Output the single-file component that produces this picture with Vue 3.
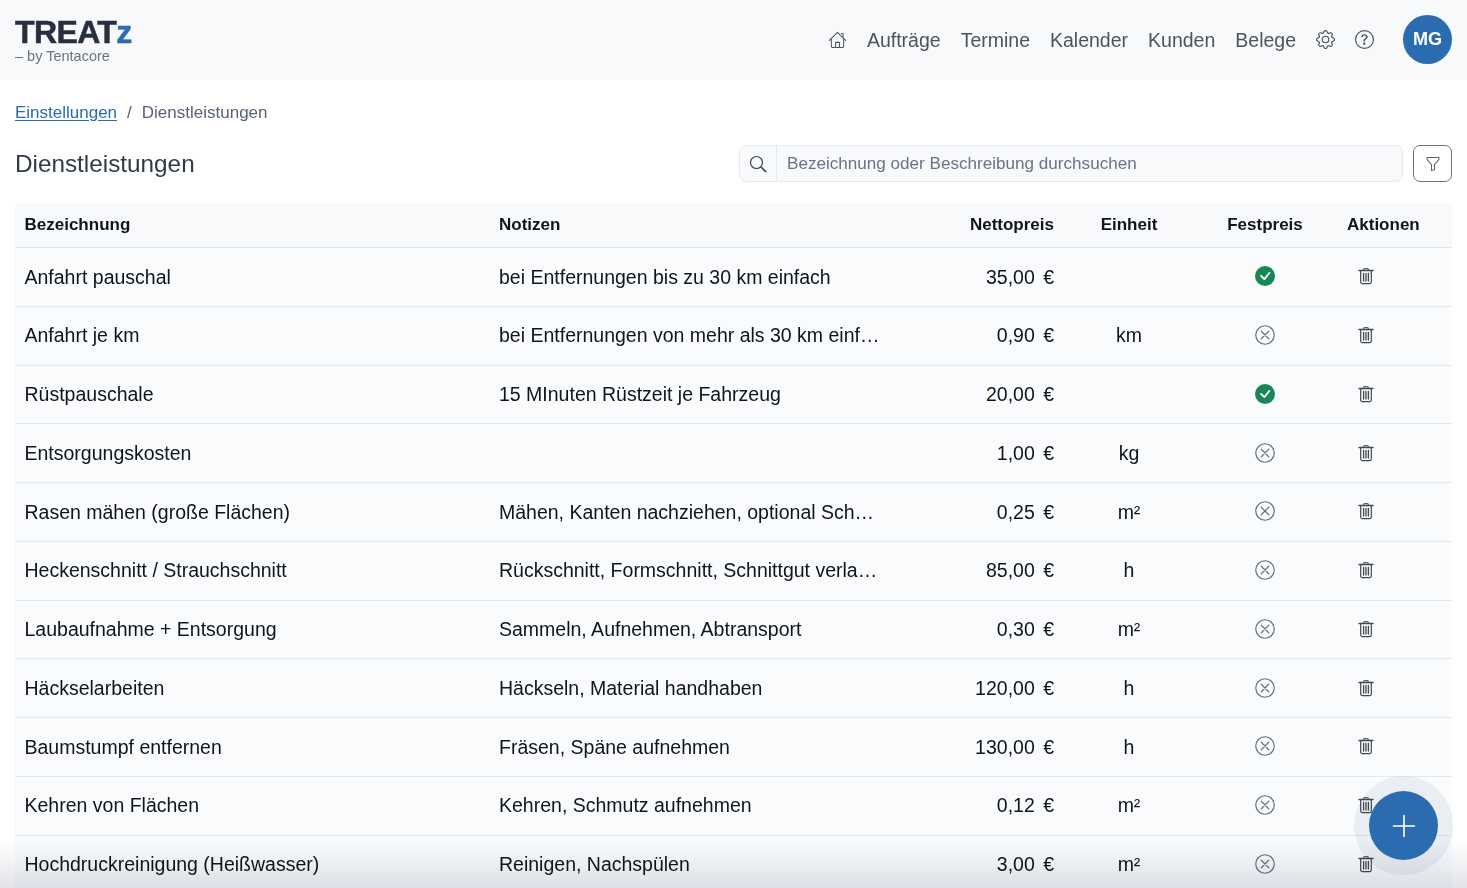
<script setup>
const rows = [
  { name: 'Anfahrt pauschal', note: 'bei Entfernungen bis zu 30 km einfach', price: '35,00 €', unit: '', fixed: true },
  { name: 'Anfahrt je km', note: 'bei Entfernungen von mehr als 30 km einf…', price: '0,90 €', unit: 'km', fixed: false },
  { name: 'Rüstpauschale', note: '15 MInuten Rüstzeit je Fahrzeug', price: '20,00 €', unit: '', fixed: true },
  { name: 'Entsorgungskosten', note: '', price: '1,00 €', unit: 'kg', fixed: false },
  { name: 'Rasen mähen (große Flächen)', note: 'Mähen, Kanten nachziehen, optional Sch…', price: '0,25 €', unit: 'm²', fixed: false },
  { name: 'Heckenschnitt / Strauchschnitt', note: 'Rückschnitt, Formschnitt, Schnittgut verla…', price: '85,00 €', unit: 'h', fixed: false },
  { name: 'Laubaufnahme + Entsorgung', note: 'Sammeln, Aufnehmen, Abtransport', price: '0,30 €', unit: 'm²', fixed: false },
  { name: 'Häckselarbeiten', note: 'Häckseln, Material handhaben', price: '120,00 €', unit: 'h', fixed: false },
  { name: 'Baumstumpf entfernen', note: 'Fräsen, Späne aufnehmen', price: '130,00 €', unit: 'h', fixed: false },
  { name: 'Kehren von Flächen', note: 'Kehren, Schmutz aufnehmen', price: '0,12 €', unit: 'm²', fixed: false },
  { name: 'Hochdruckreinigung (Heißwasser)', note: 'Reinigen, Nachspülen', price: '3,00 €', unit: 'm²', fixed: false },
]
const nav = ['Aufträge', 'Termine', 'Kalender', 'Kunden', 'Belege']
</script>

<template>
  <div class="page">
    <header class="top">
      <div class="brand">
        <div class="logo">TREAT<span>z</span></div>
        <div class="by">– by Tentacore</div>
      </div>
      <nav class="nav">
        <svg class="home" viewBox="0 0 20 20" fill="none" stroke="currentColor" stroke-width="1.100" stroke-linecap="round" stroke-linejoin="round"><path d="M1.500 10.500 10 2l8.500 8.500"/><path d="M3.500 8.500V16.800a1 1 0 0 0 1 1h11a1 1 0 0 0 1-1V8.500"/><path d="M8 17.800V12.500h4v5.300"/><path d="M14 3.200h1.800v3.800"/></svg>
        <a v-for="n in nav" :key="n" class="nav-link">{{ n }}</a>
        <svg class="nav-icon gear" viewBox="0 0 16 16" fill="currentColor"><path d="M8 4.750a3.250 3.250 0 1 0 0 6.500 3.250 3.250 0 0 0 0-6.500ZM5.750 8a2.250 2.250 0 1 1 4.500 0 2.250 2.250 0 0 1-4.500 0Z"/><path d="M9.800 1.340c-.53-1.790-3.070-1.790-3.600 0l-.1.340a.88.88 0 0 1-1.260.52l-.31-.17c-1.640-.89-3.430.9-2.540 2.540l.17.31a.88.88 0 0 1-.52 1.260l-.34.1c-1.790.53-1.790 3.070 0 3.600l.34.1a.88.88 0 0 1 .52 1.260l-.17.31c-.89 1.640.9 3.430 2.540 2.540l.31-.17a.88.88 0 0 1 1.260.52l.1.34c.53 1.790 3.070 1.790 3.600 0l.1-.34a.88.88 0 0 1 1.260-.52l.31.17c1.640.89 3.430-.9 2.540-2.540l-.17-.31a.88.88 0 0 1 .52-1.260l.34-.1c1.790-.53 1.790-3.070 0-3.600l-.34-.1a.88.88 0 0 1-.52-1.260l.17-.31c.89-1.640-.9-3.430-2.540-2.540l-.31.17a.88.88 0 0 1-1.260-.52l-.1-.34Zm-2.640.28c.25-.84 1.430-.84 1.680 0l.1.34a1.880 1.880 0 0 0 2.700 1.120l.31-.17c.76-.42 1.600.42 1.180 1.180l-.17.31a1.880 1.880 0 0 0 1.120 2.700l.34.1c.84.25.84 1.430 0 1.680l-.34.1a1.880 1.880 0 0 0-1.120 2.700l.17.31c.42.76-.42 1.600-1.180 1.180l-.31-.17a1.880 1.880 0 0 0-2.700 1.120l-.1.34c-.25.84-1.430.84-1.680 0l-.1-.34a1.880 1.880 0 0 0-2.700-1.120l-.31.17c-.76.42-1.600-.42-1.180-1.180l.17-.31a1.880 1.880 0 0 0-1.120-2.700l-.34-.1c-.84-.25-.84-1.430 0-1.680l.34-.1a1.880 1.880 0 0 0 1.120-2.700l-.17-.31c-.42-.76.42-1.600 1.180-1.180l.31.17a1.880 1.880 0 0 0 2.700-1.120l.1-.34Z"/></svg>
        <svg class="nav-icon help" viewBox="0 0 16 16" fill="currentColor"><path d="M8 15A7 7 0 1 1 8 1a7 7 0 0 1 0 14Zm0 1A8 8 0 1 0 8 0a8 8 0 0 0 0 16Z"/><path d="M5.255 5.786a.237.237 0 0 0 .241.247h.825c.138 0 .248-.113.266-.25.09-.656.54-1.134 1.342-1.134.686 0 1.314.343 1.314 1.168 0 .635-.374.927-.965 1.371-.673.489-1.206 1.060-1.168 1.987l.003.217a.25.25 0 0 0 .25.246h.811a.25.25 0 0 0 .25-.25v-.105c0-.718.273-.927 1.010-1.486.609-.463 1.244-.977 1.244-2.056 0-1.511-1.276-2.241-2.673-2.241-1.267 0-2.655.59-2.750 2.286Zm1.557 5.763c0 .533.425.927 1.010.927.609 0 1.028-.394 1.028-.927 0-.552-.42-.94-1.029-.94-.584 0-1.009.388-1.009.94Z"/></svg>
        <div class="avatar">MG</div>
      </nav>
    </header>

    <main class="content">
      <div class="crumbs">
        <a class="crumb-link">Einstellungen</a>
        <span class="crumb-sep">/</span>
        <span class="crumb-cur">Dienstleistungen</span>
      </div>

      <div class="title-row">
        <h1 class="title">Dienstleistungen</h1>
        <div class="search">
          <span class="search-icon">
            <svg width="18" height="18" viewBox="0 0 18 18" fill="none" stroke="#3f4650" stroke-width="1.200" stroke-linecap="round"><circle cx="7.500" cy="7.500" r="6"/><path d="m12 12 4.800 4.800" stroke-width="1.600"/></svg>
          </span>
          <span class="search-text">Bezeichnung oder Beschreibung durchsuchen</span>
        </div>
        <button class="filter" type="button" aria-label="Filter">
          <svg width="16" height="16" viewBox="0 0 16 16" fill="#5b6270"><path d="M1.500 1.500A.5.5 0 0 1 2 1h12a.5.5 0 0 1 .5.5v2a.5.5 0 0 1-.128.334L10 8.692V13.500a.5.5 0 0 1-.342.474l-3 1A.5.5 0 0 1 6 14.500V8.692L1.628 3.834A.5.5 0 0 1 1.500 3.500v-2Zm1 .5v1.308l4.372 4.858A.5.5 0 0 1 7 8.500v5.306l2-.666V8.500a.5.5 0 0 1 .128-.334L13.500 3.308V2h-11Z"/></svg>
        </button>
      </div>

      <div class="table">
        <div class="row head">
          <div class="c-name">Bezeichnung</div>
          <div class="c-note">Notizen</div>
          <div class="c-price">Nettopreis</div>
          <div class="c-unit">Einheit</div>
          <div class="c-fixed">Festpreis</div>
          <div class="c-act">Aktionen</div>
        </div>
        <div v-for="r in rows" :key="r.name" class="row body">
          <div class="c-name">{{ r.name }}</div>
          <div class="c-note">{{ r.note }}</div>
          <div class="c-price">{{ r.price }}</div>
          <div class="c-unit">{{ r.unit }}</div>
          <div class="c-fixed">
            <svg v-if="r.fixed" width="20" height="20" viewBox="0 0 16 16" fill="#198754"><path d="M16 8A8 8 0 1 1 0 8a8 8 0 0 1 16 0Zm-3.970-3.030a.75.75 0 0 0-1.080.022L7.477 9.417 5.384 7.323a.75.75 0 0 0-1.060 1.060L6.970 11.030a.75.75 0 0 0 1.079-.020l3.992-4.990a.75.75 0 0 0-.01-1.050Z"/></svg>
            <svg v-else width="20" height="20" viewBox="0 0 16 16" fill="none" stroke="#666e80" stroke-width="0.950" stroke-linecap="round"><circle cx="8" cy="8" r="7.400"/><path d="m5 5 6 6M11 5l-6 6"/></svg>
          </div>
          <div class="c-act">
            <svg width="16" height="18" viewBox="0 0 16 18" fill="none" stroke="#3f4650" stroke-linecap="round" stroke-linejoin="round"><path d="M1 3.500h14" stroke-width="1.400"/><path d="M5.800 3V1.700h4.400V3" stroke-width="1"/><path d="M2.700 4v10.800a1.800 1.800 0 0 0 1.800 1.800h7a1.800 1.800 0 0 0 1.800-1.800V4" stroke-width="1.200"/><path d="M5.600 6.500v7.500M8 6.500v7.500M10.400 6.500v7.500" stroke-width="1.300"/></svg>
          </div>
        </div>
      </div>
    </main>

    <div class="fade"></div>
    <button class="fab" type="button" aria-label="Neu">
      <svg width="28" height="28" viewBox="0 0 28 28" fill="none" stroke="#fff" stroke-width="1.600" stroke-linecap="round"><path d="M14 3.500v21M3.500 14h21"/></svg>
    </button>
  </div>
</template>

<style scoped>
.page {
  position: relative;
  width: 1467px;
  height: 888px;
  overflow: hidden;
  background: #fff;
  font-family: "Liberation Sans", Arial, sans-serif;
  color: #111418;
}
.top {
  height: 80px;
  background: #f8f9fb;
  display: flex;
  align-items: center;
  justify-content: space-between;
  padding: 0 15px 1px;
  box-sizing: border-box;
}
.brand { padding-top: 2px; }
.logo {
  font-size: 32px;
  font-weight: 700;
  line-height: 30px;
  letter-spacing: -0.600px;
  color: #272f40;
  -webkit-text-stroke: 0.500px #272f40;
}
.logo span {
  color: #2b6cb0;
  -webkit-text-stroke: 0.500px #2b6cb0;
}
.by {
  font-size: 14.500px;
  line-height: 18px;
  margin-top: 0;
  color: #6b7285;
}
.nav {
  display: flex;
  align-items: center;
  color: #4f5358;
}
.home { width: 19px; height: 20px; display: block; }
.nav-icon { width: 19px; height: 19px; display: block; }
.nav-link {
  font-size: 19.500px;
  margin-left: 20px;
  line-height: 24px;
}
.gear { margin-left: 20px; }
.help { margin-left: 20px; }
.avatar {
  width: 49px;
  height: 49px;
  border-radius: 50%;
  margin-left: 29px;
  background: #2b6cb0;
  color: #fff;
  font-size: 18px;
  font-weight: 700;
  display: flex;
  align-items: center;
  justify-content: center;
}
.content { padding: 0 15px; }
.crumbs {
  display: flex;
  align-items: center;
  font-size: 17px;
  line-height: 24px;
  padding-top: 21px;
  color: #586375;
}
.crumb-link { color: #2b6cb0; text-decoration: underline; text-underline-offset: 2px; }
.crumb-sep { margin: 0 10px; }
.title-row {
  display: flex;
  align-items: center;
  height: 37px;
  margin-top: 20px;
}
.title {
  flex: 1;
  margin: 0;
  font-size: 24.300px;
  font-weight: 400;
  color: #333a47;
}
.search {
  width: 664px;
  height: 37px;
  box-sizing: border-box;
  display: flex;
  border: 1px solid #e6eaf0;
  border-radius: 7px;
  background: #f8f9fb;
  margin-right: 10px;
}
.search-icon {
  width: 36px;
  display: flex;
  align-items: center;
  justify-content: center;
  border-right: 1px solid #e6eaf0;
}
.search-text {
  padding-left: 10px;
  font-size: 17.100px;
  line-height: 35px;
  color: #6a7285;
}
.filter {
  width: 39px;
  height: 37px;
  padding: 0;
  background: #fff;
  border: 1px solid #6d7278;
  border-radius: 7px;
  display: flex;
  align-items: center;
  justify-content: center;
}
.table {
  margin-top: 21px;
  width: 1437px;
}
.row {
  display: grid;
  grid-template-columns: 474px 400px 165px 150px 122px 126px;
  align-items: center;
  height: 58.750px;
  box-sizing: border-box;
  background: #f9fbfd;
  border-bottom: 1.500px solid #e6eaef;
  font-size: 19.500px;
}
.head {
  height: 45px;
  background: #f8f9fb;
  font-size: 17px;
  font-weight: 700;
  border-bottom: 1px solid #dfe3e8;
}
.body .c-name, .body .c-note, .body .c-price, .body .c-unit { padding-top: 0.600px; }
.c-name { padding-left: 9.500px; white-space: nowrap; }
.c-note { padding-left: 10px; min-width: 0; white-space: nowrap; }
.c-price { text-align: right; word-spacing: 3px; }
.c-unit { text-align: center; }
.c-fixed { text-align: center; display: flex; justify-content: center; margin-top: -1px; }
.head .c-fixed { display: block; margin-top: 0; }
.c-act { padding-left: 21px; }
.body .c-act { padding-left: 32px; margin-top: -1px; display: flex; }
.fade {
  position: absolute;
  left: 0;
  right: 0;
  bottom: 0;
  height: 48px;
  background: linear-gradient(to bottom, #ffffff, #e2e4e8);
  mix-blend-mode: multiply;
  pointer-events: none;
}
.fab {
  position: absolute;
  left: 1369px;
  top: 791px;
  width: 69px;
  height: 69px;
  padding: 0;
  border: none;
  border-radius: 50%;
  background: #2b6cb0;
  box-shadow: 0 0 0 15px rgba(43, 60, 100, 0.07);
  display: flex;
  align-items: center;
  justify-content: center;
}
</style>
